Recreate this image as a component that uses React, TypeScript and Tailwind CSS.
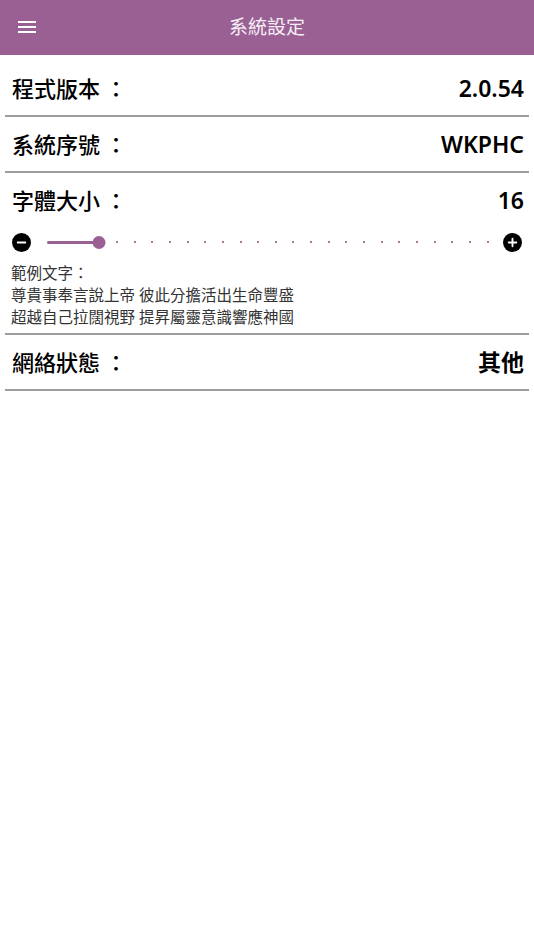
import { Minus, Plus } from "lucide-react";

const FONT = { fontFamily: '"Noto Sans", "Noto Sans CJK TC", sans-serif' };

const STEPS = 25;
const VALUE_STEP = 3;

function Label({ text }: { text: string }) {
  return (
    <span className="text-[22px] font-medium text-black">
      {text}
      <span className="ml-[5px]">：</span>
    </span>
  );
}

function Row({ label, value }: { label: string; value: string }) {
  return (
    <div className="mx-[5px] border-b-2 border-[#9e9e9e]">
      <div className="flex h-[54px] items-center justify-between pl-[7px] pr-[5px]">
        <Label text={label} />
        <span className="text-[23px] font-semibold text-black">{value}</span>
      </div>
    </div>
  );
}

function FontSlider() {
  const pct = (VALUE_STEP / STEPS) * 100;
  const dots = Array.from({ length: STEPS - VALUE_STEP }, (_, i) => VALUE_STEP + 1 + i);

  return (
    <div className="flex h-[20px] items-center">
      <div className="flex h-[19px] w-[19px] items-center justify-center rounded-full bg-black">
        <Minus size={13} strokeWidth={3.5} color="white" />
      </div>
      <div className="relative mx-[15.5px] h-[20px] flex-1">
        <div
          className="absolute left-0 top-[8.5px] h-[3px] rounded-full bg-[#9a6094]"
          style={{ width: `${pct}%` }}
        />
        {dots.map((k) => (
          <div
            key={k}
            className="absolute top-[9px] h-[2px] w-[2px] -translate-x-1/2 bg-[#a874a2]"
            style={{ left: `${(k / STEPS) * 100}%` }}
          />
        ))}
        <div
          className="absolute top-[3.5px] h-[13px] w-[13px] -translate-x-1/2 rounded-full bg-[#9a6094]"
          style={{ left: `${pct}%` }}
        />
      </div>
      <div className="flex h-[19px] w-[19px] items-center justify-center rounded-full bg-black">
        <Plus size={13} strokeWidth={3.5} color="white" />
      </div>
    </div>
  );
}

export default function App() {
  return (
    <div lang="zh-Hant" className="min-h-[950px] w-full bg-white" style={FONT}>
      {/* Top bar */}
      <header className="relative flex h-[55px] items-center justify-center bg-[#9a6094]">
        <button className="absolute left-[18px] top-[21px] flex w-[18px] flex-col gap-[3px]">
          <span className="h-[2px] w-full bg-white" />
          <span className="h-[2px] w-full bg-white" />
          <span className="h-[2px] w-full bg-white" />
        </button>
        <h1 className="text-[19px] text-[#f6eef5]">系統設定</h1>
      </header>

      <div className="mt-[6px]">
        <Row label="程式版本" value="2.0.54" />
        <Row label="系統序號" value="WKPHC" />

        {/* Font size */}
        <div className="mx-[5px] border-b-2 border-[#9e9e9e] pb-[5px]">
          <div className="flex h-[54px] items-center justify-between pl-[7px] pr-[5px]">
            <Label text="字體大小" />
            <span className="text-[23px] font-semibold text-black">16</span>
          </div>
          <div className="mt-[5px] px-[7px]">
            <FontSlider />
          </div>
          <div className="mt-[10px] px-[6px] text-[15.5px] leading-[22px] text-[#333333]">
            <p>範例文字：</p>
            <p>尊貴事奉言說上帝 彼此分擔活出生命豐盛</p>
            <p>超越自己拉闊視野 提昇屬靈意識響應神國</p>
          </div>
        </div>

        <Row label="網絡狀態" value="其他" />
      </div>
    </div>
  );
}
